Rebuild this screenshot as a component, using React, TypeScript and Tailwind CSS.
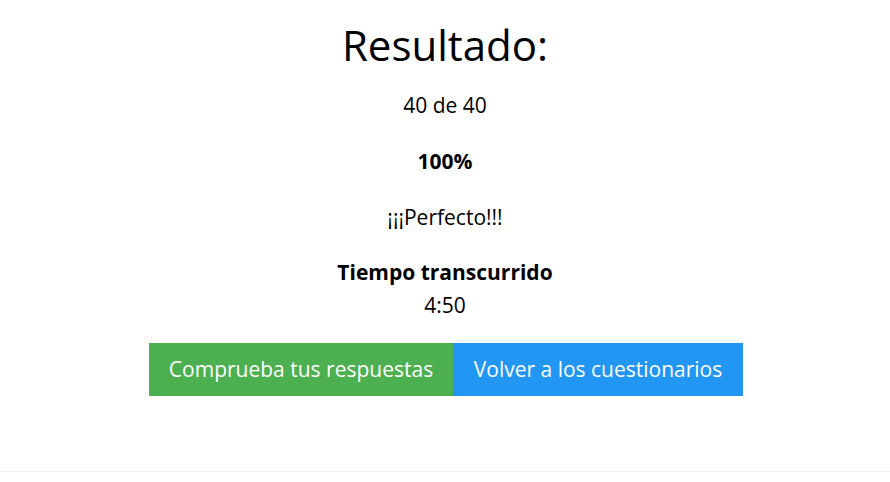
export default function App() {
  return (
    <div className="w-[890px] h-[482px] bg-white text-black flex flex-col" style={{ fontFamily: '"Open Sans", "Noto Sans", sans-serif' }}>
      <div className="flex flex-col items-center">
        <h1 className="mt-[18px] h-[54px] leading-[54px] text-[42px] font-normal">Resultado:</h1>
        <p className="mt-[21px] h-[24px] leading-[24px] text-[21px]">40 de 40</p>
        <p className="mt-[32px] h-[24px] leading-[24px] text-[21px] font-bold">100%</p>
        <p className="mt-[32px] h-[24px] leading-[24px] text-[21px]">¡¡¡Perfecto!!!</p>
        <p className="mt-[31px] h-[24px] leading-[24px] text-[21px] font-bold">Tiempo transcurrido</p>
        <p className="mt-[9px] h-[24px] leading-[24px] text-[21px]">4:50</p>
        <div className="mt-[26px] ml-[2px] flex">
          <button className="h-[53px] w-[304px] bg-[#4CAF50] text-white text-[21px]">Comprueba tus respuestas</button>
          <button className="h-[53px] w-[290px] bg-[#2196F3] text-white text-[21px]">Volver a los cuestionarios</button>
        </div>
      </div>
      <div className="mt-auto mb-[10px] h-px bg-[#eeeeee]" />
    </div>
  );
}
